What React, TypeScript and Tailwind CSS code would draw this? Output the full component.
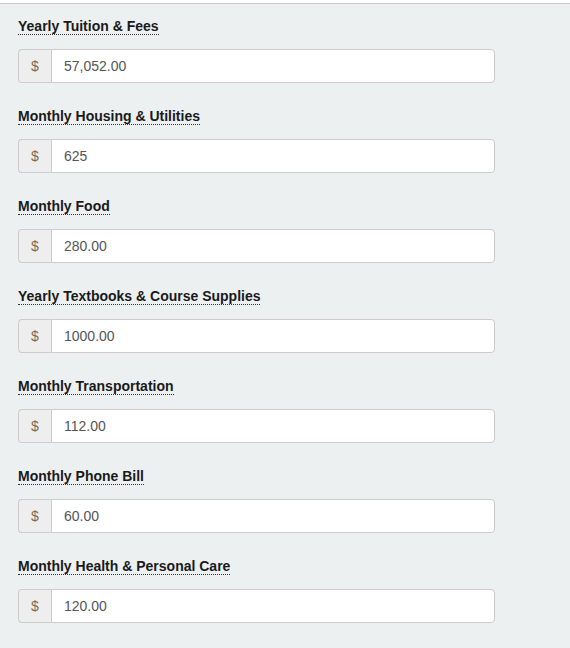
const fields = [
  { label: "Yearly Tuition & Fees", value: "57,052.00" },
  { label: "Monthly Housing & Utilities", value: "625" },
  { label: "Monthly Food", value: "280.00" },
  { label: "Yearly Textbooks & Course Supplies", value: "1000.00" },
  { label: "Monthly Transportation", value: "112.00" },
  { label: "Monthly Phone Bill", value: "60.00" },
  { label: "Monthly Health & Personal Care", value: "120.00" },
];

function MoneyField({ label, value }: { label: string; value: string }) {
  return (
    <div className="mb-[23px]">
      <label className="block mb-[13px] text-[14px] leading-5 font-bold text-[#1a1a1a]">
        <span className="border-b border-dotted border-[#333]">{label}</span>
      </label>
      <div className="flex h-[34px] w-[477px]">
        <span className="flex items-center justify-center w-[33px] bg-[#eeeeee] border border-r-0 border-[#cccccc] rounded-l-[4px] text-[14px] text-[#7d6a52]">
          $
        </span>
        <input
          type="text"
          defaultValue={value}
          className="flex-1 min-w-0 bg-white border border-[#cccccc] rounded-r-[4px] px-3 text-[14px] text-[#555555] outline-none"
        />
      </div>
    </div>
  );
}

export default function App() {
  return (
    <div
      className="min-h-[648px] bg-white pt-[3px]"
      style={{ fontFamily: '"Liberation Sans", Arial, sans-serif' }}
    >
      <div className="min-h-[645px] bg-[#ecf0f1] border-t border-[#c8c8c8] pt-[12px] pl-[18px]">
        {fields.map((f) => (
          <MoneyField key={f.label} label={f.label} value={f.value} />
        ))}
      </div>
    </div>
  );
}
